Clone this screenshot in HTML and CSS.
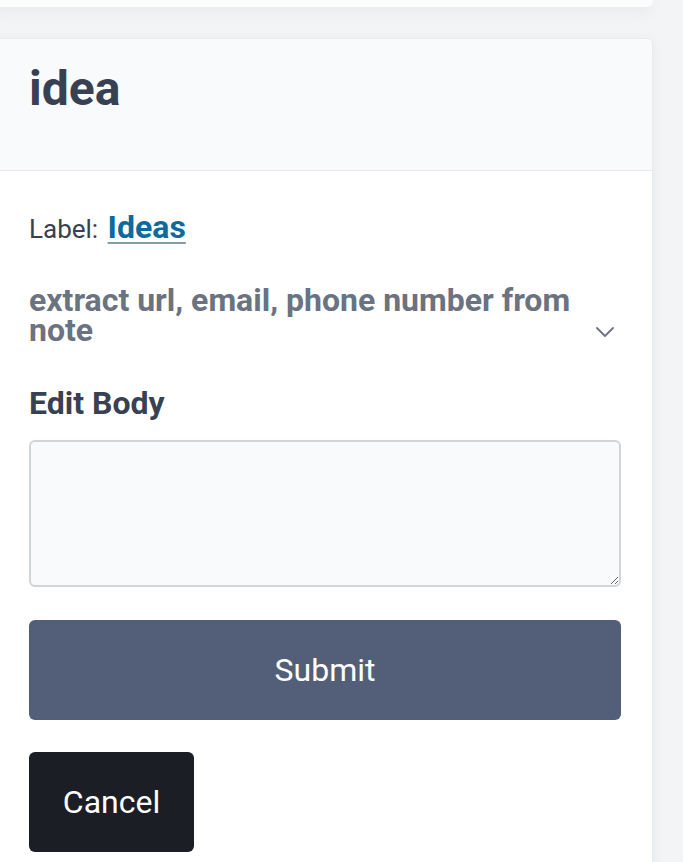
FILE: index.html
```html
<!DOCTYPE html>
<html lang="en">
<head>
<meta charset="utf-8">
<title>idea</title>
<link rel="stylesheet" href="styles.css">
</head>
<body>
<div class="page">
  <div class="prev-card"></div>
  <div class="card">
    <div class="card-header">
      <h1 class="title">idea</h1>
    </div>
    <div class="card-body">
      <p class="label-line">Label: <a class="label-link" href="#">Ideas</a></p>
      <div class="note-row">
        <h2 class="note-title">extract url, email, phone number from note</h2>
        <span class="chevron">
          <svg width="20" height="12" viewBox="0 0 20 12" fill="none" stroke="#6b7280" stroke-width="1.8" stroke-linecap="round" stroke-linejoin="round"><path d="M2 2l8 8 8-8"/></svg>
        </span>
      </div>
      <label class="field-label" for="body">Edit Body</label>
      <textarea id="body" class="body-input"></textarea>
      <button class="btn btn-submit" type="button">Submit</button>
      <button class="btn btn-cancel" type="button">Cancel</button>
    </div>
  </div>
</div>
</body>
</html>
```
FILE: styles.css
```css
html, body {
  margin: 0;
  padding: 0;
}
body {
  background: #f3f4f6;
  font-family: Roboto, "Liberation Sans", Arial, sans-serif;
  overflow: hidden;
  height: 862px;
}
.page {
  width: 663px;
  margin-left: -10px;
}
.prev-card {
  height: 7px;
  background: #fbfcfc;
  border-radius: 0 0 6px 6px;
  box-shadow: 0 4px 14px rgba(0, 0, 0, 0.07);
  margin-bottom: 31px;
}
.card {
  background: #ffffff;
  border: 1px solid #e9ebee;
  border-radius: 6px;
  box-shadow: 0 2px 12px rgba(0, 0, 0, 0.05);
  overflow: hidden;
}
.card-header {
  background: #f9fafb;
  border-bottom: 1px solid #e5e7eb;
  padding: 26px 38px 0;
  height: 105px;
}
.title {
  margin: 0;
  font-size: 48px;
  line-height: 48px;
  font-weight: 700;
  color: #374151;
}
.card-body {
  padding: 37px 32px 40px 38px;
}
.label-line {
  margin: 0;
  font-size: 26px;
  line-height: 38px;
  color: #374151;
}
.label-link {
  margin-left: 3px;
  font-size: 32px;
  color: #0b6b9c;
  font-weight: 700;
  text-decoration: underline;
  text-decoration-color: #7e9fae;
  text-underline-offset: 4px;
  text-decoration-thickness: 2px;
}
.note-row {
  display: flex;
  align-items: flex-start;
  margin-top: 37px;
}
.note-title {
  flex: 1;
  margin: 0;
  font-size: 32px;
  line-height: 30px;
  font-weight: 700;
  color: #6b7280;
}
.chevron {
  padding-top: 41px;
  padding-left: 20px;
  padding-right: 5px;
  display: flex;
}
.field-label {
  display: block;
  margin-top: 40px;
  font-size: 32px;
  line-height: 36px;
  font-weight: 700;
  color: #374151;
}
.body-input {
  display: block;
  box-sizing: border-box;
  width: 592px;
  height: 147px;
  margin-top: 19px;
  border: 2px solid #d1d5db;
  border-radius: 6px;
  background: #f9fafb;
  font: inherit;
  resize: vertical;
}
.btn {
  display: block;
  border: 0;
  border-radius: 6px;
  color: #ffffff;
  font-family: Roboto, "Liberation Sans", Arial, sans-serif;
  font-size: 32px;
  height: 100px;
}
.btn-submit {
  width: 592px;
  margin-top: 33px;
  background: #535f79;
}
.btn-cancel {
  width: 165px;
  margin-top: 32px;
  background: #1b1e25;
}
```
